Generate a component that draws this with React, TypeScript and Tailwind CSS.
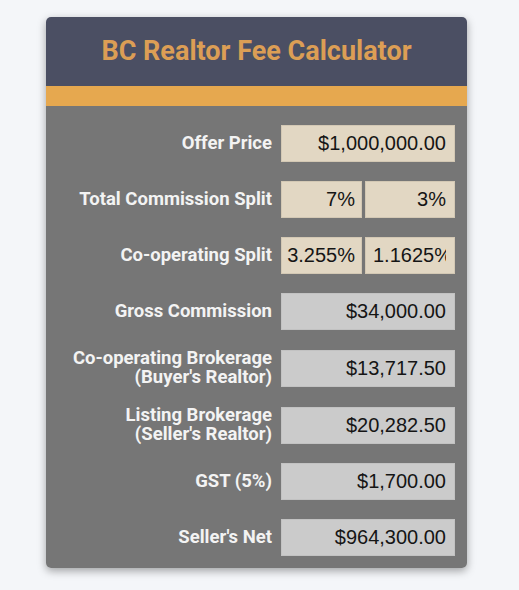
const rows: { label: string[]; values: string[]; editable: boolean }[] = [
  { label: ['Offer Price'], values: ['$1,000,000.00'], editable: true },
  { label: ['Total Commission Split'], values: ['7%', '3%'], editable: true },
  { label: ['Co-operating Split'], values: ['3.255%', '1.1625%'], editable: true },
  { label: ['Gross Commission'], values: ['$34,000.00'], editable: false },
  { label: ['Co-operating Brokerage', "(Buyer's Realtor)"], values: ['$13,717.50'], editable: false },
  { label: ['Listing Brokerage', "(Seller's Realtor)"], values: ['$20,282.50'], editable: false },
  { label: ['GST (5%)'], values: ['$1,700.00'], editable: false },
  { label: ["Seller's Net"], values: ['$964,300.00'], editable: false },
];

function Field({ value, editable, width, pad }: { value: string; editable: boolean; width: string; pad: string }) {
  return (
    <input
      readOnly
      value={value}
      className={`${width} ${pad} h-[37px] text-right text-[20px] text-[#151515] font-['Liberation_Sans',Arial,sans-serif] border focus:outline-none ${
        editable ? 'bg-[#e2d7c3] border-[#d3c8b4]' : 'bg-[#cbcbcb] border-[#c2c2c2]'
      }`}
    />
  );
}

export default function App() {
  return (
    <div className="min-h-[590px] bg-[#f4f6f9] pt-[17px] font-['Roboto',sans-serif]">
      <div className="ml-[46px] w-[421px] rounded-[5px] overflow-hidden shadow-[0_3px_8px_rgba(0,0,0,0.35)]">
        <div className="h-[69px] bg-[#4b4f63] flex items-center justify-center">
          <h1 className="text-[27px] font-bold text-[#dc9e55]">BC Realtor Fee Calculator</h1>
        </div>
        <div className="h-[20px] bg-[#e6a84f]" />
        <div className="bg-[#767676] pt-[19px] pb-[12px] pr-[12px] flex flex-col gap-[19px]">
          {rows.map((row) => (
            <div key={row.label[0]} className="flex items-center justify-end gap-[9px]">
              <div className="text-right text-[18.5px] leading-[19px] font-bold text-[#f3f3f3]">
                {row.label.map((l) => (
                  <div key={l}>{l}</div>
                ))}
              </div>
              {row.values.length === 1 ? (
                <Field value={row.values[0]} editable={row.editable} width="w-[174px]" pad="px-[8px]" />
              ) : (
                <div className="flex gap-[3px]">
                  <Field value={row.values[0]} editable={row.editable} width="w-[81px]" pad="pl-[5px] pr-[6px]" />
                  <Field value={row.values[1]} editable={row.editable} width="w-[90px]" pad="pl-[7px] pr-[8px]" />
                </div>
              )}
            </div>
          ))}
        </div>
      </div>
    </div>
  );
}
